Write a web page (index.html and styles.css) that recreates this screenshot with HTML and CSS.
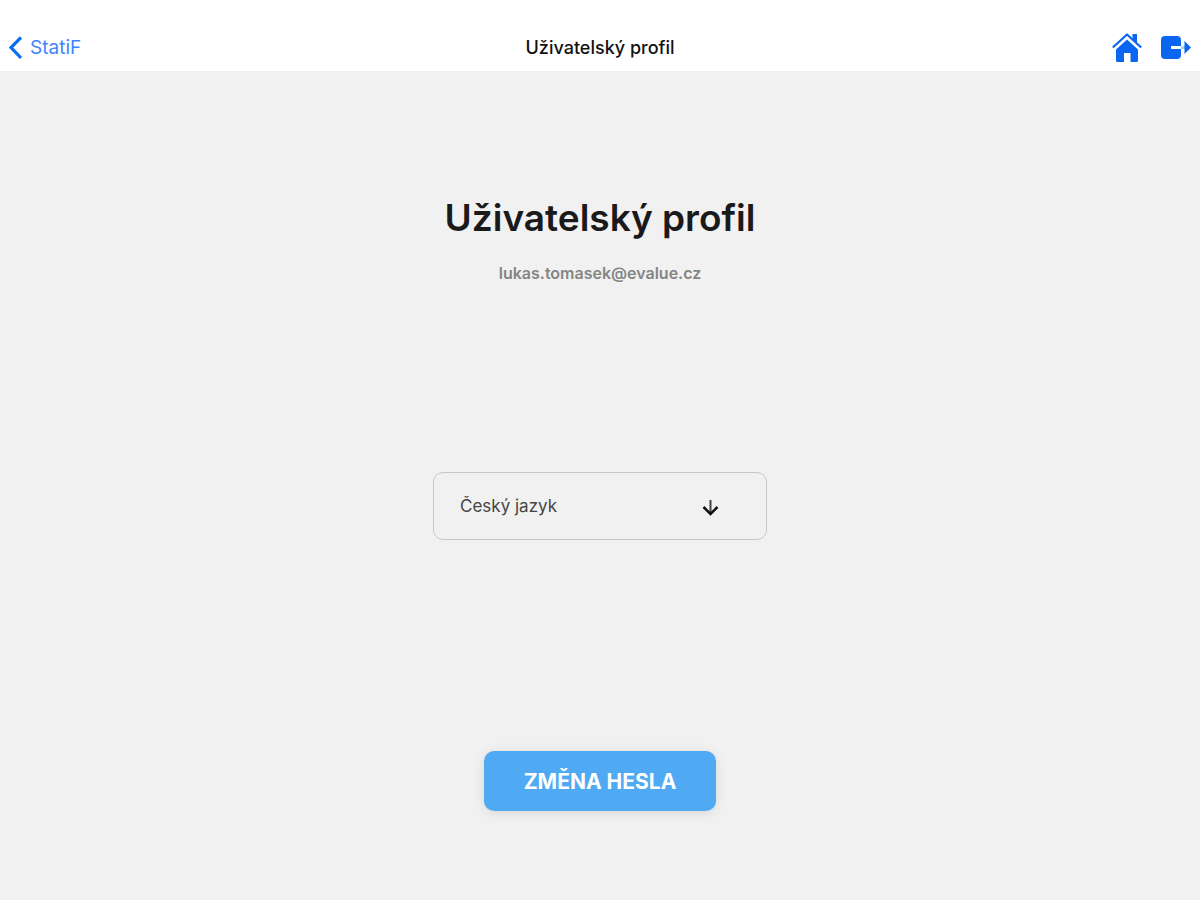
FILE: index.html
```html
<!DOCTYPE html>
<html lang="cs">
<head>
<meta charset="utf-8">
<meta name="viewport" content="width=device-width, initial-scale=1">
<title>Uživatelský profil</title>
<link rel="stylesheet" href="styles.css">
</head>
<body>
<header class="navbar">
  <a class="back" href="#">
    <svg class="back-icon" viewBox="0 0 14 24" aria-hidden="true"><path d="M13 1.500 3 11.500l10 10.500" fill="none" stroke="currentColor" stroke-width="3.200"/></svg>
    <span>StatiF</span>
  </a>
  <div class="navbar-title">Uživatelský profil</div>
  <div class="actions">
    <button class="icon-button" type="button" aria-label="Domů">
      <svg class="icon" viewBox="0 0 32 32" aria-hidden="true">
        <path d="M15 7.500 26 17.500V28.500q0 1.500-1.500 1.500H18.500V21H12v9H5.500Q4 30 4 28.500V17.500z" fill="currentColor"/>
        <path d="M20.500 2H25v9l-4.500-4z" fill="currentColor"/>
        <path d="M.8 15.500 15 2.500l14.200 13" fill="none" stroke="currentColor" stroke-width="2.200" stroke-linejoin="round"/>
      </svg>
    </button>
    <button class="icon-button" type="button" aria-label="Odhlásit se">
      <svg class="icon" viewBox="0 0 32 32" aria-hidden="true">
        <path d="M5 4h12q4 0 4 4v6H11v3h10v6q0 4-4 4H5q-4 0-4-4V8q0-4 4-4z" fill="currentColor"/>
        <path d="M21 14h4v3h-4z" fill="currentColor" opacity=".3"/>
        <path d="M24.500 9 31 15.500l-6.500 6.500z" fill="currentColor"/>
      </svg>
    </button>
  </div>
</header>
<main class="profile">
  <h1 class="name">Uživatelský profil</h1>
  <p class="email">lukas.tomasek@evalue.cz</p>
  <div class="language">
    <select class="language-select" aria-label="Jazyk">
      <option>Český jazyk</option>
    </select>
    <svg class="language-arrow" viewBox="0 0 18 18" aria-hidden="true"><path d="M9.500 1v14" fill="none" stroke="#444" stroke-width="2"/><path d="M2.500 8l7 7 7-7" fill="none" stroke="#111" stroke-width="2.500"/></svg>
  </div>
  <button class="primary" type="button">ZMĚNA HESLA</button>
</main>
</body>
</html>
```
FILE: styles.css
```css
* {
  box-sizing: border-box;
}

body {
  margin: 0;
  min-height: 100vh;
  background: #f1f1f1;
  color: #1a1a1a;
  font-family: Inter, "Liberation Sans", sans-serif;
}

.navbar {
  display: grid;
  grid-template-columns: 1fr auto 1fr;
  align-items: center;
  padding: 24px 8px 0;
  height: 71px;
  background: #fff;
}

.back {
  display: flex;
  align-items: center;
  gap: 8px;
  color: #4285f8;
  font-size: 19px;
  text-decoration: none;
}

.back-icon {
  width: 14px;
  height: 24px;
  color: #0a6fec;
}

.navbar-title {
  color: #111;
  font-size: 18px;
  font-weight: 500;
}

.actions {
  display: flex;
  justify-content: flex-end;
  gap: 16px;
}

.icon-button {
  padding: 0;
  border: 0;
  background: none;
  color: #0a66f0;
}

.icon {
  display: block;
  width: 32px;
  height: 32px;
}

.profile {
  display: flex;
  flex-direction: column;
  align-items: center;
  padding: 123px 16px 88px;
}

.name {
  margin: 0;
  font-size: 37px;
  font-weight: 600;
  line-height: 48px;
}

.email {
  margin: 21px 0 0;
  color: #858585;
  font-size: 16px;
  font-weight: 600;
  line-height: 20px;
}

.language {
  position: relative;
  width: 334px;
  max-width: 100%;
  margin-top: 189px;
}

.language-select {
  width: 100%;
  height: 68px;
  padding: 0 64px 0 26px;
  border: 1px solid #c8c8c8;
  border-radius: 10px;
  appearance: none;
  background: transparent;
  color: #444;
  font: inherit;
  font-size: 17px;
}

.language-arrow {
  position: absolute;
  top: 27px;
  right: 48px;
  width: 18px;
  height: 18px;
  pointer-events: none;
}

.primary {
  margin-top: 211px;
  padding: 0 40px;
  height: 60px;
  border: 0;
  border-radius: 10px;
  background: #4faaf3;
  box-shadow: 0 2px 12px rgba(0, 0, 0, 0.1);
  color: #fff;
  font: inherit;
  font-size: 21px;
  font-weight: 700;
}
```
